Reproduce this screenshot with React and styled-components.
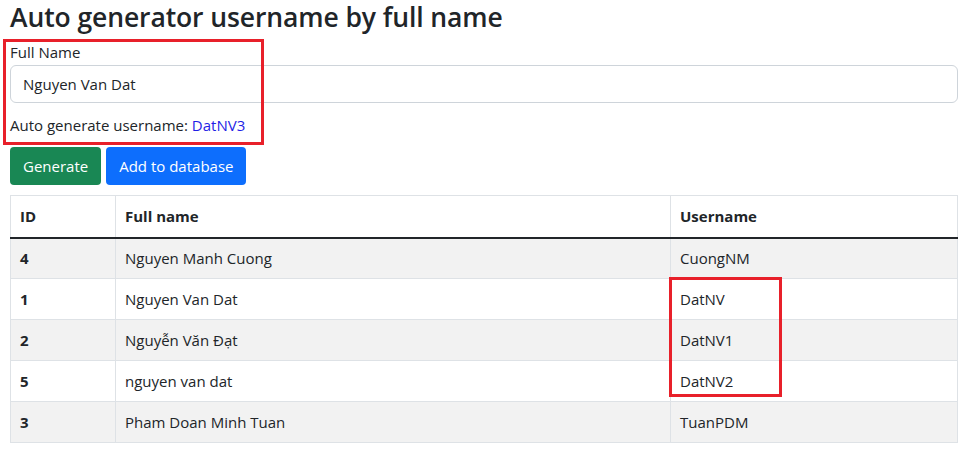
import React from 'react';
import styled, { createGlobalStyle } from 'styled-components';

const GlobalStyle = createGlobalStyle`
  html, body {
    margin: 0;
    padding: 0;
    background: #fff;
  }
  body {
    font-family: 'Open Sans', 'Noto Sans', sans-serif;
    font-size: 16px;
    line-height: 1.5;
    color: #212529;
  }
  * { box-sizing: border-box; }
`

const Page = styled.div`
  width: 948px;
  margin-left: 10px;
  position: relative;
`

const Title = styled.h2`
  margin: 0 0 6px;
  font-size: 26.5px;
  font-weight: 600;
  line-height: 35px;
  letter-spacing: -0.1px;
`

const FormGroup = styled.div`
  display: flex;
  flex-direction: column;
`

const Label = styled.label`
  font-size: 15px;
  margin-bottom: 1px;
`

const Input = styled.input`
  height: 38px;
  padding: 6px 12px;
  font: inherit;
  font-size: 15px;
  color: #212529;
  border: 1px solid #ced4da;
  border-radius: 6px;
  outline: none;
`

const Hint = styled.div`
  margin-top: 11px;
  font-size: 15px;
`

const Generated = styled.span`
  color: #1f1fe6;
`

const Actions = styled.div`
  display: flex;
  gap: 5px;
  margin-top: 11px;
`

const Button = styled.button`
  height: 38px;
  padding: 0 13px;
  font: inherit;
  font-size: 15px;
  color: #fff;
  border: none;
  border-radius: 4px;
  background: ${p => p.$variant === 'success' ? '#198754' : '#0d6efd'};
`

const Table = styled.table`
  width: 100%;
  margin-top: 10px;
  border-collapse: collapse;
  font-size: 15px;
`

const Th = styled.th`
  width: ${p => p.$w || 'auto'};
  text-align: left;
  font-weight: 700;
  padding: 8px 9px;
  height: 42px;
  border: 1px solid #dee2e6;
  border-bottom: 2px solid #212529;
`

const Row = styled.tr`
  background: ${p => p.$striped ? '#f2f2f2' : '#fff'};
`

const Td = styled.td`
  padding: 8px 9px;
  height: 41px;
  border: 1px solid #dee2e6;
  font-weight: ${p => p.$bold ? 700 : 400};
`

const Mark = styled.div`
  position: absolute;
  border: 3px solid #e8202a;
  pointer-events: none;
`

const users = [
  { id: 4, name: 'Nguyen Manh Cuong', username: 'CuongNM' },
  { id: 1, name: 'Nguyen Van Dat', username: 'DatNV' },
  { id: 2, name: 'Nguyễn Văn Đạt', username: 'DatNV1' },
  { id: 5, name: 'nguyen van dat', username: 'DatNV2' },
  { id: 3, name: 'Pham Doan Minh Tuan', username: 'TuanPDM' },
]

const App = () => {
  return (
    <Page>
      <GlobalStyle />
      <Title>Auto generator username by full name</Title>
      <FormGroup>
        <Label>Full Name</Label>
        <Input defaultValue='Nguyen Van Dat' />
        <Hint>Auto generate username: <Generated>DatNV3</Generated></Hint>
      </FormGroup>
      <Actions>
        <Button $variant='success'>Generate</Button>
        <Button>Add to database</Button>
      </Actions>
      <Table>
        <thead>
          <tr>
            <Th $w='105px'>ID</Th>
            <Th $w='555px'>Full name</Th>
            <Th>Username</Th>
          </tr>
        </thead>
        <tbody>
          {users.map((u, i) => (
            <Row key={u.id} $striped={i % 2 === 0}>
              <Td $bold>{u.id}</Td>
              <Td>{u.name}</Td>
              <Td>{u.username}</Td>
            </Row>
          ))}
        </tbody>
      </Table>
      <Mark style={{ left: -7, top: 39, width: 261, height: 106 }} />
      <Mark style={{ left: 659, top: 277, width: 113, height: 120 }} />
    </Page>
  );
};

export default App;
